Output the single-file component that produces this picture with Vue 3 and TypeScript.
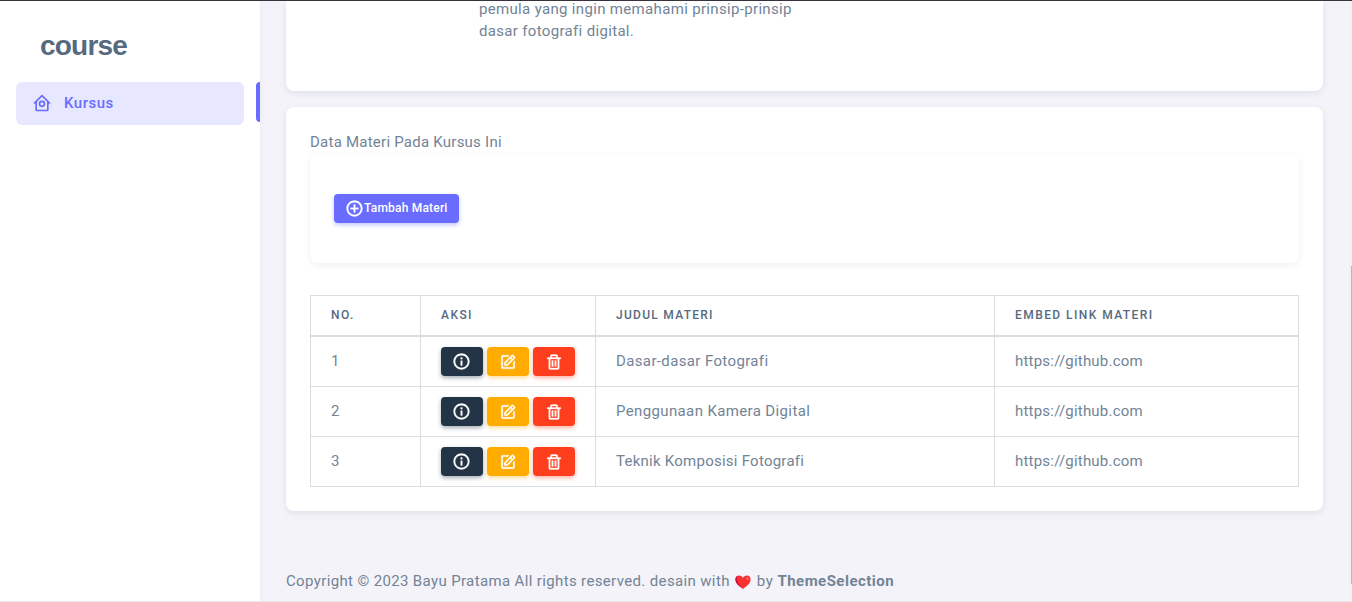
<script setup lang="ts">
interface Materi {
  no: number
  judul: string
  link: string
  spacing: string
}

const rows: Materi[] = [
  { no: 1, judul: 'Dasar-dasar Fotografi', link: 'https://github.com', spacing: 'wide' },
  { no: 2, judul: 'Penggunaan Kamera Digital', link: 'https://github.com', spacing: 'wide' },
  { no: 3, judul: 'Teknik Komposisi Fotografi', link: 'https://github.com', spacing: 'normal' },
]

const ring =
  'M12 2C6.486 2 2 6.486 2 12s4.486 10 10 10 10-4.486 10-10S17.514 2 12 2zm0 18c-4.411 0-8-3.589-8-8s3.589-8 8-8 8 3.589 8 8-3.589 8-8 8z'

const actions: { kind: string; label: string; paths: string[] }[] = [
  { kind: 'dark', label: 'Detail', paths: [ring, 'M11 11h2v6h-2zm0-4h2v2h-2z'] },
  {
    kind: 'warning',
    label: 'Edit',
    paths: [
      'm7 17.013 4.413-.015 9.632-9.54c.378-.378.586-.88.586-1.414s-.208-1.036-.586-1.414l-1.586-1.586c-.756-.756-2.075-.752-2.825-.003L7 12.583v4.43zM18.045 4.458l1.589 1.583-1.597 1.582-1.586-1.585 1.594-1.58zM9 13.417l6.03-5.973 1.586 1.586-6.029 5.971L9 15.006v-1.589z',
      'M5 21h14c1.103 0 2-.897 2-2v-8.668l-2 2V19H8.158c-.026 0-.053.01-.079.01-.033 0-.066-.009-.1-.01H5V5h6.847l2-2H5c-1.103 0-2 .897-2 2v14c0 1.103.897 2 2 2z',
    ],
  },
  {
    kind: 'danger',
    label: 'Hapus',
    paths: [
      'M5 20a2 2 0 0 0 2 2h10a2 2 0 0 0 2-2V8h2V6h-4V4a2 2 0 0 0-2-2H9a2 2 0 0 0-2 2v2H3v2h2zM9 4h6v2H9zM8 8h9v12H7V8z',
      'M9 10h2v8H9zm4 0h2v8h-2z',
    ],
  },
]
</script>

<template>
  <div class="page">
    <aside class="sidebar">
      <div class="brand"><span>course</span></div>
      <nav class="menu">
        <a class="menu-link">
          <svg class="icon" viewBox="0 0 24 24">
            <path d="M12.71 2.29a1 1 0 0 0-1.42 0l-9 9a1 1 0 0 0 0 1.42A1 1 0 0 0 3 13h1v7a2 2 0 0 0 2 2h12a2 2 0 0 0 2-2v-7h1a1 1 0 0 0 1-1 1 1 0 0 0-.29-.71zM6 20v-9.59l6-6 6 6V20z" />
            <path d="M12 9a4 4 0 1 0 0 8 4 4 0 0 0 0-8zm0 6a2 2 0 1 1 0-4 2 2 0 0 1 0 4z" />
          </svg>
          <span class="menu-text">Kursus</span>
        </a>
        <i class="menu-marker"></i>
      </nav>
    </aside>

    <main class="content">
      <section class="card about">
        <p>pemula yang ingin memahami prinsip-prinsip<br />dasar fotografi digital.</p>
      </section>

      <section class="card materials">
        <div class="title">Data Materi Pada Kursus Ini</div>
        <div class="card toolbar">
          <button class="btn primary">
            <svg class="icon" viewBox="0 0 24 24">
              <path d="M13 7h-2v4H7v2h4v4h2v-4h4v-2h-4z" />
              <path :d="ring" />
            </svg>
            <span>Tambah Materi</span>
          </button>
        </div>
        <table>
          <colgroup><col class="c1" /><col class="c2" /><col class="c3" /><col class="c4" /></colgroup>
          <thead>
            <tr>
              <th>No.</th>
              <th>Aksi</th>
              <th class="th-judul">Judul Materi</th>
              <th>Embed Link Materi</th>
            </tr>
          </thead>
          <tbody>
            <tr v-for="row in rows" :key="row.no">
              <td>{{ row.no }}</td>
              <td class="cell-actions">
                <div class="actions">
                  <button v-for="a in actions" :key="a.kind" class="btn" :class="a.kind" :aria-label="a.label">
                    <svg class="icon" viewBox="0 0 24 24"><path v-for="p in a.paths" :key="p" :d="p" /></svg>
                  </button>
                </div>
              </td>
              <td :class="row.spacing">{{ row.judul }}</td>
              <td class="link">{{ row.link }}</td>
            </tr>
          </tbody>
        </table>
      </section>

      <footer class="footer">
        <span class="copy">Copyright © 2023 Bayu Pratama All rights reserved. desain with</span>
        <svg class="heart" viewBox="0 0 16 14">
          <path fill="#f8312f" d="M8 14C5 11.8 .4 8.8 .4 4.6.4 2.2 2 .6 4.1.6c1.7 0 3.1.9 3.9 2.3C8.8 1.5 10.2.6 11.9.6c2.1 0 3.7 1.6 3.7 4C15.6 8.8 11 11.8 8 14z" />
          <path fill="#ca0b4a" d="M8 14C5 11.8.4 8.8.4 4.6.4 3 1.1 1.8 2.2 1.1 1 5.2 3.3 9.8 8 14z" />
          <ellipse cx="12.5" cy="3.8" rx="1" ry="1.7" fill="#ff7376" transform="rotate(-35 12.5 3.8)" />
        </svg>
        <span class="by">by</span>
        <b>ThemeSelection</b>
      </footer>
    </main>
    <div class="scrollbar"><i></i></div>
  </div>
</template>

<style>
html,
body {
  margin: 0;
  overflow: hidden;
}
</style>

<style scoped>
* {
  box-sizing: border-box;
}
.page {
  display: flex;
  width: 1352px;
  height: 602px;
  overflow: hidden;
  border-top: 1px solid #36343a;
  border-bottom: 1px solid #e9e9ec;
  background: #f4f3f9;
  color: #728496;
  font-family: Roboto, 'Liberation Sans', sans-serif;
  font-size: 15px;
  line-height: 22px;
}
.icon {
  display: block;
  flex: none;
  width: 20px;
  height: 20px;
  fill: currentColor;
}
.sidebar {
  flex: none;
  width: 260px;
  background: #fff;
  box-shadow: 0 2px 6px rgba(67, 89, 113, 0.08);
}
.brand {
  height: 81px;
  padding: 25px 0 0 40px;
  color: #566a7f;
  font: bold 28px/40px 'Liberation Sans', sans-serif;
  letter-spacing: -0.8px;
}
.menu {
  display: flex;
  justify-content: space-between;
  padding-left: 16px;
}
.menu-link {
  display: flex;
  align-items: center;
  gap: 12px;
  width: 228px;
  height: 43px;
  padding: 0 0 1px 16px;
  border-radius: 6px;
  background: #e7e7ff;
  color: #696cff;
  font-weight: 500;
}
.menu-text {
  margin-top: -1px;
  letter-spacing: 0.5px;
}
.menu-marker {
  width: 4px;
  height: 40px;
  border-radius: 4px 0 0 4px;
  background: #696cff;
}
.content {
  flex: none;
  width: 1089px;
  padding: 0 26px;
}
.card {
  border-radius: 8px;
  background: #fff;
  box-shadow: 0 2px 6px rgba(67, 89, 113, 0.12);
}
.about {
  display: flex;
  align-items: flex-start;
  width: 1037px;
  height: 90px;
  padding-left: 193px;
  border-radius: 0 0 8px 8px;
}
.about p {
  margin: -3px 0 0;
  letter-spacing: 0.33px;
}
.materials {
  width: 1037px;
  height: 404px;
  margin-top: 16px;
  padding: 24px;
}
.title {
  height: 23px;
  letter-spacing: 0.24px;
}
.toolbar {
  height: 109px;
  margin-bottom: 32px;
  padding: 40px 24px;
  box-shadow: 0 2px 6px rgba(67, 89, 113, 0.09);
}
.btn {
  display: flex;
  align-items: center;
  justify-content: center;
  width: 42px;
  height: 29px;
  padding: 0;
  border: 0;
  border-radius: 4px;
  color: #fff;
  font: 500 12px/18px Roboto, sans-serif;
}
.btn .icon {
  width: 19px;
  height: 19px;
  stroke: currentColor;
  stroke-width: 0.4;
}
.primary {
  justify-content: flex-start;
  width: 125px;
  padding: 0 0 0 11px;
  background: #696cff;
  box-shadow: 0 2px 4px rgba(105, 108, 255, 0.4);
}
.primary span {
  margin-top: -2px;
  letter-spacing: 0.2px;
  white-space: nowrap;
}
.dark {
  padding-right: 1px;
  background: #233446;
  box-shadow: 0 2px 4px rgba(35, 52, 70, 0.4);
}
.warning {
  background: #ffab00;
  box-shadow: 0 2px 4px rgba(255, 171, 0, 0.4);
}
.danger {
  background: #ff3e1d;
  box-shadow: 0 2px 4px rgba(255, 62, 29, 0.4);
}
.warning .icon,
.danger .icon {
  width: 18px;
  height: 18px;
}
.actions {
  display: flex;
  gap: 4px;
}
table {
  width: 989px;
  table-layout: fixed;
  border-spacing: 0;
  border-top: 1px solid #d9dee3;
  border-left: 1px solid #d9dee3;
}
.c1 { width: 110px; }
.c2 { width: 175px; }
.c3 { width: 399px; }
.c4 { width: 304px; }
th,
td {
  height: 50px;
  padding: 0 0 2px 20px;
  border-right: 1px solid #d9dee3;
  border-bottom: 1px solid #d9dee3;
  text-align: left;
}
th {
  height: 41px;
  border-bottom-width: 2px;
  color: #566a7f;
  font-size: 12px;
  font-weight: 500;
  letter-spacing: 1.43px;
  text-transform: uppercase;
}
.th-judul {
  letter-spacing: 1.27px;
}
td.cell-actions {
  padding-bottom: 0;
}
.wide {
  letter-spacing: 0.37px;
}
.normal {
  letter-spacing: 0.25px;
}
.link {
  letter-spacing: 0.21px;
}
.footer {
  display: flex;
  align-items: center;
  height: 22px;
  margin-top: 59px;
}
.copy {
  letter-spacing: 0.36px;
}
.heart {
  width: 16px;
  height: 14px;
  margin: 1px 6px 0 5px;
}
.by {
  margin-right: 4px;
  letter-spacing: 0.6px;
}
.footer b {
  letter-spacing: 0.47px;
}
.scrollbar {
  width: 3px;
  margin-left: auto;
  padding: 265px 0 0 2px;
  background: #f1f1f1;
}
.scrollbar i {
  display: block;
  width: 1px;
  height: 318px;
  background: #b8b8b8;
}
</style>
